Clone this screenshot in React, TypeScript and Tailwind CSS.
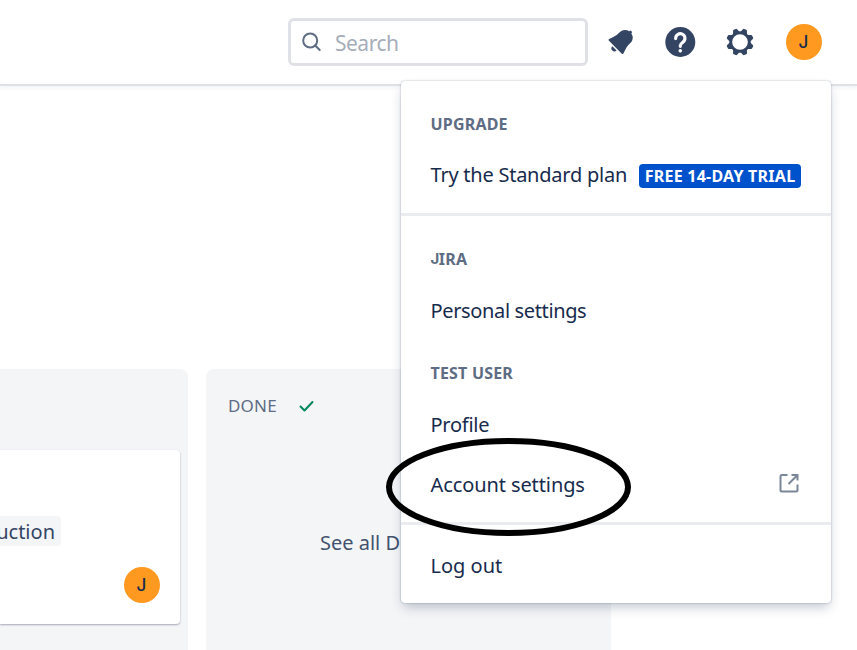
import type { ReactNode } from 'react';

function Avatar() {
  return (
    <div className="flex h-9 w-9 items-center justify-center rounded-full bg-[#ff991f] pt-px pr-px font-['Inter',sans-serif] text-[17px] leading-none font-medium text-[#172b4d]">
      J
    </div>
  );
}

function BellIcon() {
  return (
    <svg className="h-9 w-9" viewBox="-0.4 0 24 24" fill="#344563">
      <path d="M6.485 17.669a2 2 0 002.829 0l-2.829-2.83a2 2 0 000 2.83zm4.897-12.191l-.725.725c-.782.782-2.21 1.813-3.206 2.311l-3.017 1.509c-.495.248-.584.774-.187 1.171l8.556 8.556c.398.396.922.313 1.171-.188l1.51-3.016c.494-.988 1.526-2.42 2.311-3.206l.725-.726a5.048 5.048 0 00.64-6.356 1.01 1.01 0 10-1.354-1.494c-.023.025-.046.049-.066.075a5.043 5.043 0 00-2.788-.84 5.036 5.036 0 00-3.57 1.478z" />
    </svg>
  );
}

function HelpIcon() {
  return (
    <svg className="h-9 w-9" viewBox="0 0 24 24">
      <circle cx="12.200" cy="12" r="10" fill="#344563" />
      <path d="M9.100 9.700a3.100 3.100 0 1 1 4.900 2.400c-1.100.8-1.800 1.200-1.800 2.200v.6" fill="none" stroke="#fff" strokeWidth="2.1" strokeLinecap="round" />
      <circle cx="12.200" cy="17.900" r="1.2" fill="#fff" />
    </svg>
  );
}

function GearIcon() {
  return (
    <svg className="h-9 w-9" viewBox="-18 -18 36 36">
      <circle r="9.3" fill="none" stroke="#344563" strokeWidth="2.9" />
      {[22.5, 67.5, 112.5, 157.5, 202.5, 247.5, 292.5, 337.5].map((a) => (
        <path key={a} d="M-3.400 -9.800L-2.200 -12.900Q-1.900 -13.700 -1.200 -13.700H1.200Q1.900 -13.700 2.200 -12.900L3.400 -9.800Z" fill="#344563" transform={`rotate(${a})`} />
      ))}
    </svg>
  );
}

function Heading({ children }: { children: ReactNode }) {
  return <h2 className="flex h-[26px] items-center px-[29.5px] text-base font-bold tracking-[0.2px] text-[#5e6c84]">{children}</h2>;
}

function Item({ children, tracking = '' }: { children: ReactNode; tracking?: string }) {
  return (
    <a className={`flex h-[60px] items-center pr-[30px] pl-[29.5px] text-[20px] whitespace-nowrap text-[#172b4d] ${tracking}`}>{children}</a>
  );
}

function AccountMenu() {
  return (
    <nav className="absolute top-[81px] left-[401px] h-[522px] w-[430px] rounded bg-white shadow-[0_0_1.5px_rgba(9,30,66,0.45),0_6px_12px_-2px_rgba(9,30,66,0.25)]">
      <div className="border-b-[3px] border-[#ebecf0] pt-[30px] pb-2">
        <Heading>UPGRADE</Heading>
        <div className="pt-2">
          <Item>
            <span className="tracking-[-0.24px]">Try the Standard plan</span>
            <span className="mt-[2px] ml-auto flex h-6 w-[162px] shrink-0 items-center justify-center rounded bg-[#0052cc] text-base font-bold tracking-[0.25px] text-white">
              FREE 14-DAY TRIAL
            </span>
          </Item>
        </div>
      </div>
      <div className="border-b-[3px] border-[#ebecf0] pt-[30px] pb-[7px]">
        <Heading>
          <span className="font-['Inter',sans-serif] text-[15px] tracking-[-0.5px]">J</span>IRA
        </Heading>
        <div className="pt-[9px] pb-[19px]">
          <Item tracking="tracking-[-0.36px]">Personal settings</Item>
        </div>
        <Heading>TEST USER</Heading>
        <div className="pt-[9px]">
          <Item tracking="tracking-[-0.25px]">Profile</Item>
          <Item tracking="tracking-[-0.1px]">
            <span>Account settings</span>
            <svg className="mr-[2px] mb-1 ml-auto h-5 w-5" viewBox="0 0 20 20" fill="none" stroke="#7a869a" strokeWidth="2">
              <path d="M8.500 2H3A1.500 1.500 0 0 0 1.500 3.500V17A1.500 1.500 0 0 0 3 18.500H17A1.500 1.500 0 0 0 18.500 17V11.500M9.500 11L18 2.500M12.500 2H18.500V7.500" />
            </svg>
          </Item>
        </div>
      </div>
      <div className="pt-[11px]">
        <Item>Log out</Item>
      </div>
    </nav>
  );
}

export default function App() {
  return (
    <div className="relative flex h-[650px] w-[857px] flex-col overflow-hidden bg-white font-['Noto_Sans',sans-serif]">
      <header className="flex h-[86px] shrink-0 items-center justify-end border-b-2 border-[#dfe1e6] pr-[35px] shadow-[0_2px_4px_rgba(9,30,66,0.06)]">
        <div className="mr-[14px] flex h-12 w-[300px] items-center rounded-md border-[3px] border-[#dfe1e6] pl-[10px]">
          <svg className="h-[22px] w-[22px]" viewBox="0.300 0 22 22" fill="none" stroke="#5e6c84" strokeWidth="2">
            <circle cx="9.500" cy="9.500" r="7" />
            <path d="M14.500 14.500L19 19" strokeLinecap="round" />
          </svg>
          <span className="mt-[3px] ml-3 text-[21px] tracking-[-0.5px] text-[#a5adba]">Search</span>
        </div>
        <div className="flex items-center gap-6">
          <BellIcon />
          <HelpIcon />
          <GearIcon />
        </div>
        <div className="ml-7">
          <Avatar />
        </div>
      </header>
      <main className="mt-[283px] flex flex-1 gap-[18px]">
        <section className="w-[188px] rounded-tr-lg bg-[#f4f5f7] pt-[81px]">
          <div className="flex h-[174px] w-[180px] flex-col rounded-r bg-white pt-[66px] shadow-[0_1px_2px_rgba(9,30,66,0.35)]">
            <div className="flex h-[30px] w-[61px] items-center justify-end rounded-r bg-[#f4f5f7] pt-px pr-[6px] text-[20px] text-[#344563]">
              uction
            </div>
            <div className="mt-[21px] ml-[124px]">
              <Avatar />
            </div>
          </div>
        </section>
        <section className="w-[405px] rounded-t-lg bg-[#f4f5f7] pt-[22px]">
          <div className="flex h-[30px] items-center pl-[22px] text-[17px] text-[#5e6c84]">
            <span className="w-[71px] tracking-[0.2px]">DONE</span>
            <svg className="h-4 w-4" viewBox="0 0 16 16" fill="none" stroke="#00875a" strokeWidth="2" strokeLinecap="round" strokeLinejoin="round">
              <path d="M1.500 8.500L5.500 12.500L13.500 4" />
            </svg>
          </div>
          <div className="mt-[107px] pl-[114px] text-[20px] leading-[30px] text-[#42526e]">See all D</div>
        </section>
      </main>
      <AccountMenu />
      <svg className="absolute top-[436px] left-[384px] h-[102px] w-[250px]" viewBox="0 0 250 102" fill="none">
        <ellipse cx="124.500" cy="51" rx="119.500" ry="46" stroke="#000" strokeWidth="6" />
      </svg>
    </div>
  );
}
